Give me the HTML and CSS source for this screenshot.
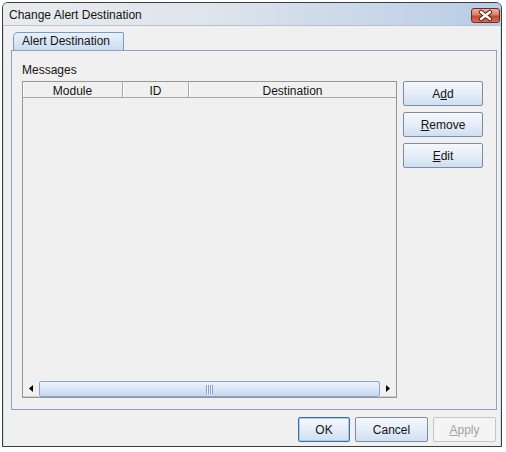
FILE: index.html
```html
<!DOCTYPE html>
<html>
<head>
<meta charset="utf-8">
<title>Change Alert Destination</title>
<link rel="stylesheet" href="styles.css">
</head>
<body>
<div class="window">
  <div class="titlebar">
    <span class="title">Change Alert Destination</span>
    <span class="close">
      <svg width="29" height="15" viewBox="0 0 29 15">
        <path d="M10 4 L19 11 M19 4 L10 11" stroke="#5a1e12" stroke-width="4.4" stroke-linecap="round" fill="none"/>
        <path d="M10 4 L19 11 M19 4 L10 11" stroke="#ffffff" stroke-width="2.4" stroke-linecap="round" fill="none"/>
      </svg>
    </span>
  </div>
  <div class="client">
    <div class="tabs"><div class="tab">Alert Destination</div></div>
    <div class="panel">
      <div class="label">Messages</div>
      <div class="content">
        <div class="scrollpane">
          <div class="header">
            <div class="th col-module">Module</div>
            <div class="th col-id">ID</div>
            <div class="th col-dest">Destination</div>
          </div>
          <div class="viewport"></div>
          <div class="hscroll">
            <div class="sb-btn"><svg width="4" height="7" viewBox="0 0 4 7"><polygon points="4,0 4,7 0,3.5" fill="#000"/></svg></div>
            <div class="thumb"><span class="grip"></span></div>
            <div class="sb-btn"><svg width="4" height="7" viewBox="0 0 4 7"><polygon points="0,0 0,7 4,3.5" fill="#000"/></svg></div>
          </div>
        </div>
        <div class="side">
          <button class="btn side-btn">A<u>d</u>d</button>
          <button class="btn side-btn"><u>R</u>emove</button>
          <button class="btn side-btn"><u>E</u>dit</button>
        </div>
      </div>
    </div>
    <div class="footer">
      <button class="btn ok">OK</button>
      <button class="btn cancel">Cancel</button>
      <button class="btn apply" disabled><u>A</u>pply</button>
    </div>
  </div>
</div>
</body>
</html>
```

FILE: styles.css
```css
* { box-sizing: border-box; }
html, body { margin: 0; padding: 0; background: #ffffff; }
body {
  font-family: "Liberation Sans", Arial, sans-serif;
  font-size: 12px;
  color: #141414;
}
.window {
  margin: 2px 0 0 2px;
  width: 500px;
  height: 445px;
  border: 1px solid #3d3d3d;
  border-radius: 6px 6px 0 0;
  display: flex;
  flex-direction: column;
  background: #f0f0f0;
  box-shadow: 0 2px 0 #3ec2dc;
  overflow: hidden;
}
.titlebar {
  flex: none;
  height: 23px;
  display: flex;
  justify-content: space-between;
  align-items: flex-start;
  background: linear-gradient(to right, #e9ebee 0%, #dfe5ec 40%, #b8cce6 100%);
  border-bottom: 1px solid #b4c2d3;
}
.title {
  padding: 1px 0 0 6px;
  line-height: 22px;
  color: #141414;
}
.close {
  margin: 5px 1px 0 0;
  width: 29px;
  height: 15px;
  border: 1px solid #6e2a1d;
  border-radius: 3px;
  background: linear-gradient(#eab0a1 0%, #d9806a 45%, #c4462e 55%, #d9715a 100%);
  display: flex;
  align-items: center;
  justify-content: center;
}
.close svg { display: block; margin: -1px; }
.client {
  flex: 1;
  display: flex;
  flex-direction: column;
  padding: 6px 4px 0 8px;
  box-shadow: inset 1px 0 0 #d3deea, inset -1px 0 0 #d3deea;
}
.tabs {
  flex: none;
  height: 18px;
  display: flex;
  padding-left: 2px;
}
.tab {
  width: 111px;
  height: 18px;
  border: 1px solid #7a9ac6;
  border-bottom: none;
  border-radius: 5px 2px 0 0;
  background: linear-gradient(#e8f1fb, #c8dcf3);
  padding-left: 8px;
  line-height: 16px;
  color: #141414;
}
.panel {
  flex: none;
  height: 360px;
  border: 1px solid #8ca3c2;
  padding: 12px 12px 0 10px;
}
.label {
  line-height: 14px;
  margin-bottom: 4px;
  color: #141414;
}
.content {
  display: flex;
  align-items: flex-start;
  gap: 6px;
}
.scrollpane {
  width: 375px;
  height: 317px;
  border: 1px solid #969696;
  display: flex;
  flex-direction: column;
}
.header {
  flex: none;
  height: 16px;
  display: flex;
  border-bottom: 1px solid #a8a8a8;
}
.th {
  height: 15px;
  padding-top: 3px;
  line-height: 12px;
  text-align: center;
  border-right: 1px solid #a8a8a8;
  box-shadow: inset 1px 0 0 #ffffff;
  color: #141414;
}
.col-module { width: 100px; }
.col-id { width: 66px; }
.col-dest { flex: 1; border-right: none; }
.viewport { flex: 1; }
.hscroll {
  flex: none;
  height: 16px;
  display: flex;
}
.sb-btn {
  width: 16px;
  display: flex;
  align-items: center;
  justify-content: center;
  background: #f0f0f0;
  border-bottom: 1px solid #c9c9c9;
}
.sb-btn svg { display: block; }
.thumb {
  flex: 1;
  border: 1px solid #8aa5d0;
  border-radius: 2px;
  background: linear-gradient(#edf3fc 0%, #dbe7f7 50%, #c3d7f0 100%);
  display: flex;
  align-items: center;
  justify-content: center;
}
.grip {
  width: 7px;
  height: 9px;
  background: repeating-linear-gradient(to right, #839fcd 0 1px, #f3f7fc 1px 2px);
}
.side {
  display: flex;
  flex-direction: column;
  gap: 6px;
}
.btn {
  height: 25px;
  padding: 1px 0 0 0;
  font-family: "Liberation Sans", Arial, sans-serif;
  font-size: 12px;
  color: #141414;
  border: 1px solid #7b8ca4;
  border-radius: 2px;
  background: linear-gradient(#f6f9fd 0%, #e5edf8 50%, #cfdff1 100%);
}
.side-btn { width: 80px; }
.footer {
  display: flex;
  justify-content: flex-end;
  gap: 5px;
  padding: 7px 1px 0 0;
}
.ok {
  width: 52px;
  border-color: #3b6ea5;
  box-shadow: inset 0 0 0 1px #a9cbee;
}
.cancel { width: 73px; }
.apply {
  width: 63px;
  color: #a3a3a3;
  background: #f4f4f4;
  border-color: #c6c6c6;
}
```
